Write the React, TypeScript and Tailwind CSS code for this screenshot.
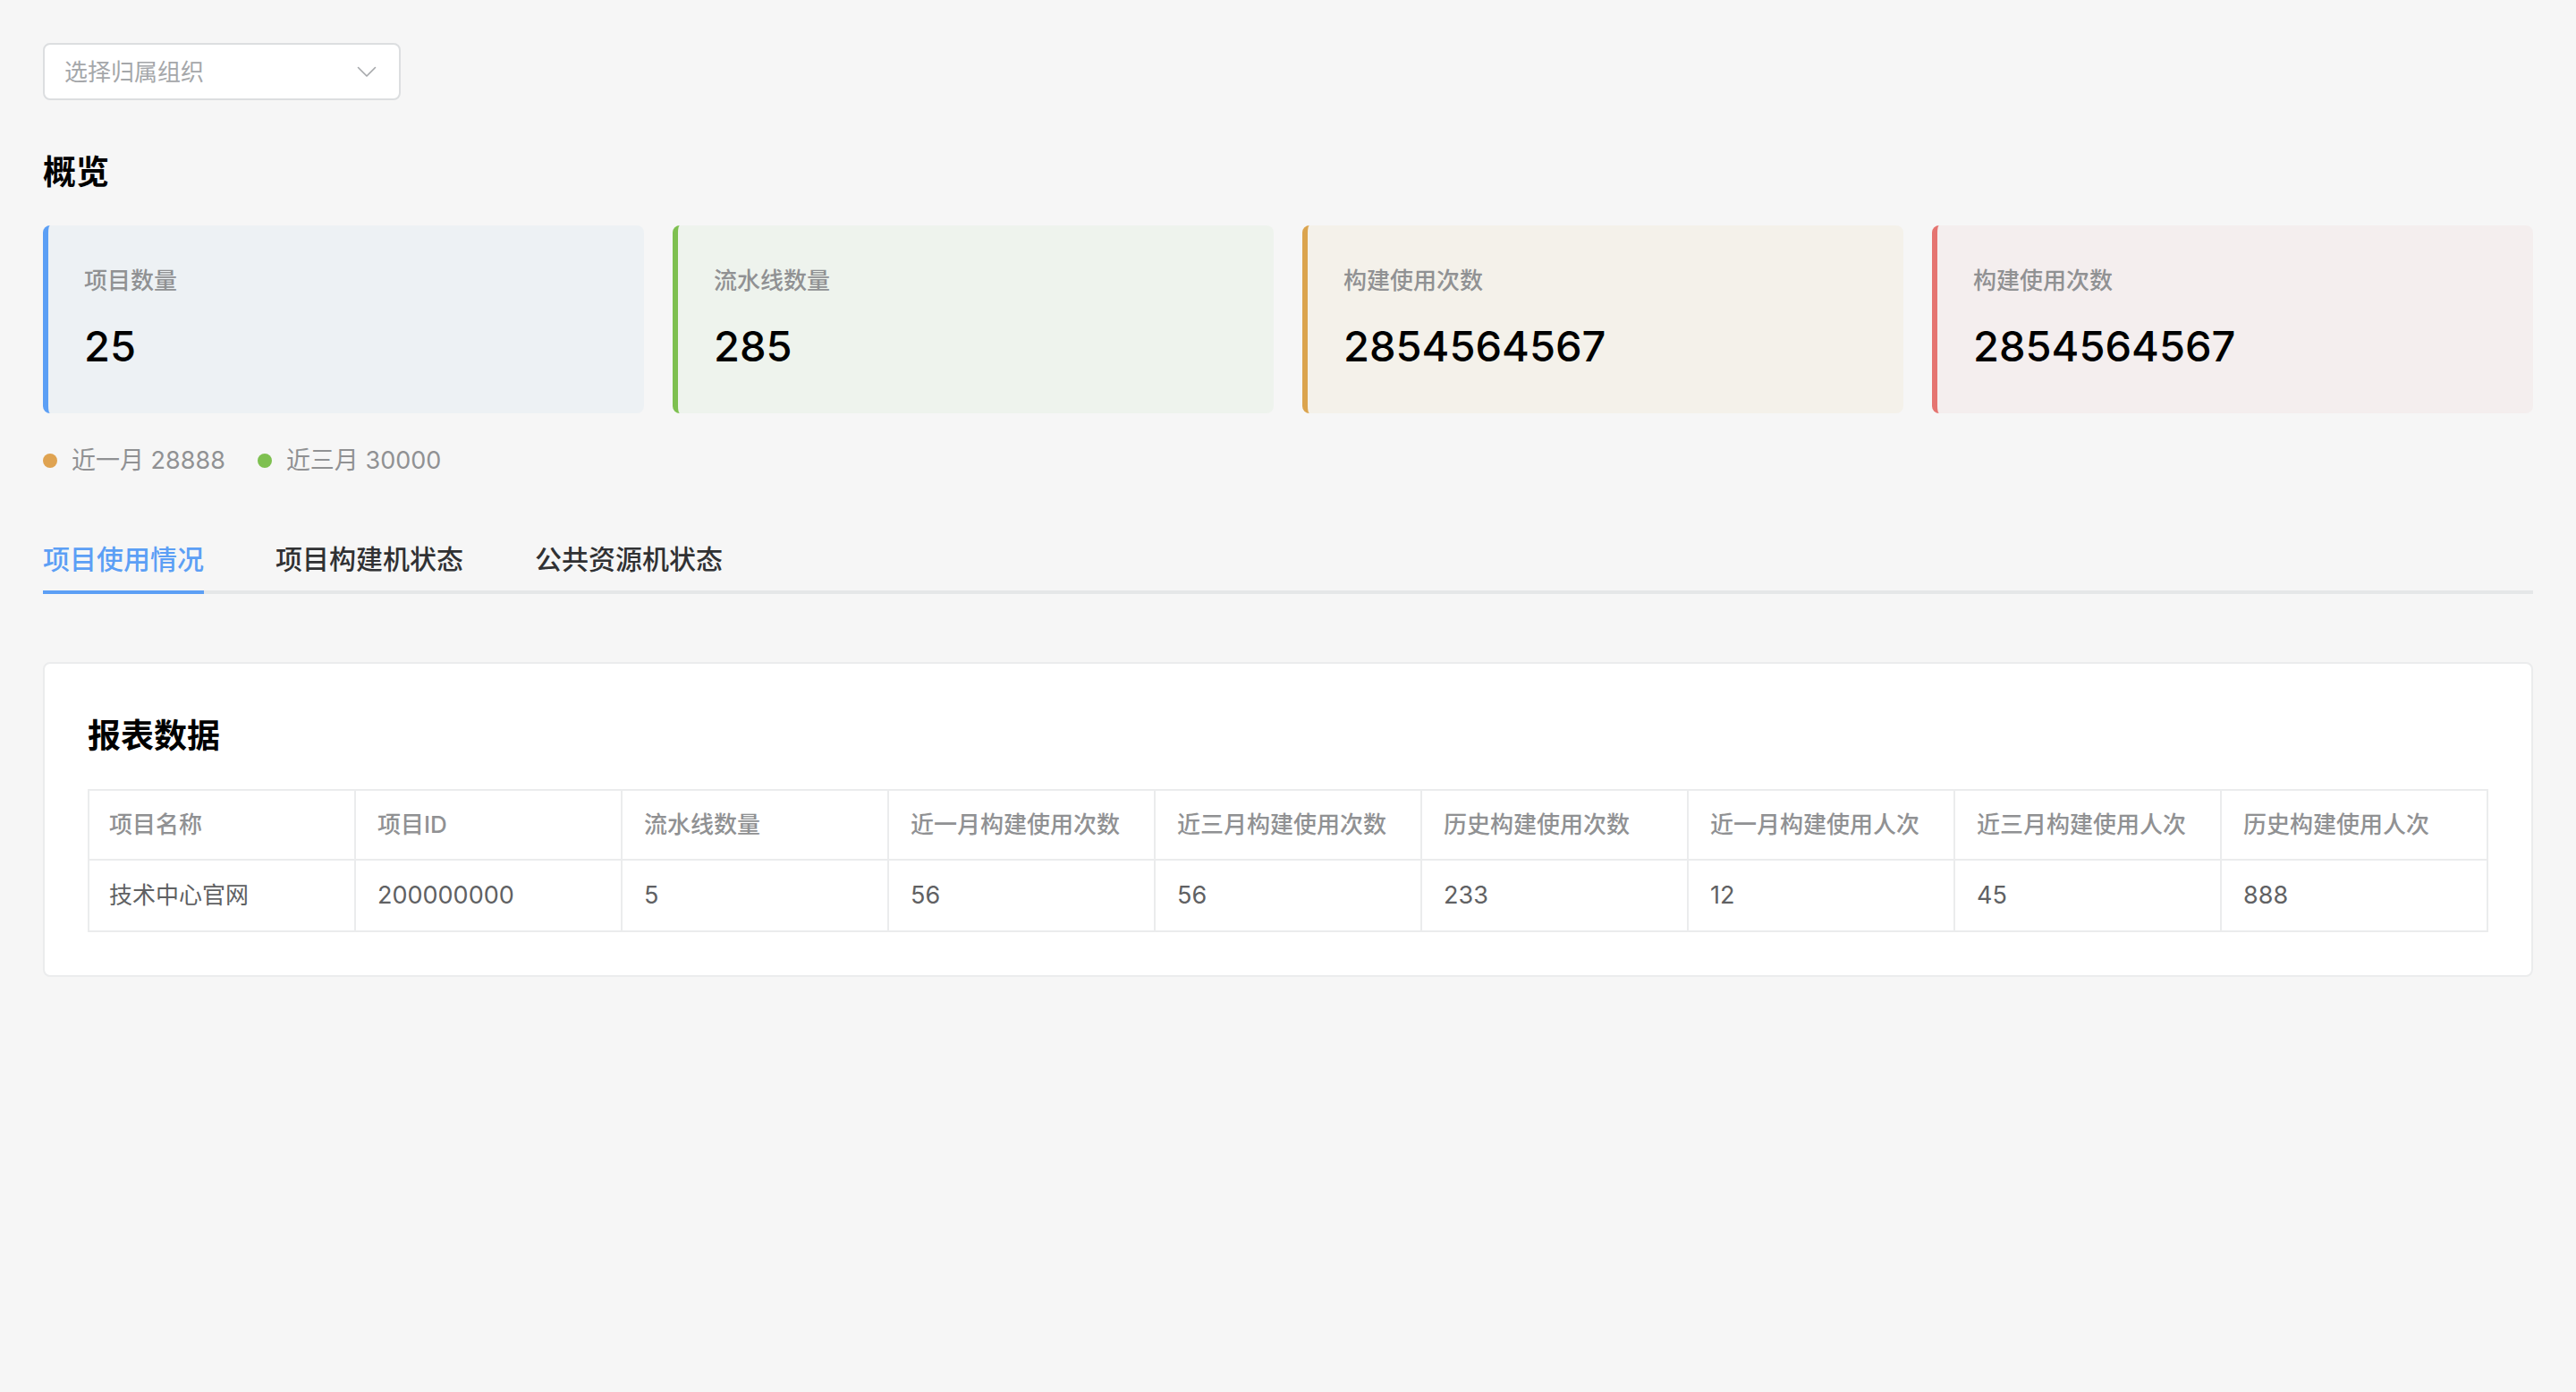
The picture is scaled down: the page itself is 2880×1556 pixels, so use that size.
import { useState } from "react";

const stats = [
  { label: "项目数量", value: "25", style: "border-[#5c9ff5] bg-[#edf1f4]" },
  { label: "流水线数量", value: "285", style: "border-[#7ec050] bg-[#eef3ed]" },
  { label: "构建使用次数", value: "2854564567", style: "border-[#dba44e] bg-[#f4f1ea]" },
  { label: "构建使用次数", value: "2854564567", style: "border-[#e57470] bg-[#f4eeee]" },
];

const legend = [
  { label: "近一月 28888", dot: "bg-[#dfa351]" },
  { label: "近三月 30000", dot: "bg-[#7ec050]" },
];

const tabs = ["项目使用情况", "项目构建机状态", "公共资源机状态"];

const columns = [
  "项目名称",
  "项目ID",
  "流水线数量",
  "近一月构建使用次数",
  "近三月构建使用次数",
  "历史构建使用次数",
  "近一月构建使用人次",
  "近三月构建使用人次",
  "历史构建使用人次",
];

const rows = [["技术中心官网", "200000000", "5", "56", "56", "233", "12", "45", "888"]];

function OrgSelect() {
  return (
    <div className="relative w-[400px]">
      <select
        aria-label="选择归属组织"
        defaultValue=""
        className="block h-16 w-full appearance-none rounded-lg border-2 border-[#dcdee0] bg-white pr-16 pl-[22px] text-[26px] text-[#a5a7aa] outline-none"
      >
        <option value="">选择归属组织</option>
      </select>
      <svg
        viewBox="0 0 24 14"
        className="pointer-events-none absolute top-[25px] right-[26px] h-[14px] w-6"
        fill="none"
        stroke="#a5a7aa"
        strokeWidth="1.6"
        strokeLinecap="round"
        strokeLinejoin="round"
      >
        <path d="M2.500 2.500 12 12l9.500-9.500" />
      </svg>
    </div>
  );
}

function Tabs({ active, onChange }: { active: number; onChange: (i: number) => void }) {
  return (
    <div role="tablist" className="mt-[70px] flex gap-20 shadow-[inset_0_-4px_0_#e5e7e8]">
      {tabs.map((tab, i) => (
        <button
          key={tab}
          type="button"
          role="tab"
          aria-selected={i === active}
          onClick={() => onChange(i)}
          className={
            i === active
              ? "border-b-4 border-[#5c9ff5] pb-[15px] text-[30px] leading-10 font-medium text-[#5c9ff5]"
              : "border-b-4 border-transparent pb-[15px] text-[30px] leading-10 font-medium text-[#303133]"
          }
        >
          {tab}
        </button>
      ))}
    </div>
  );
}

export default function App() {
  const [active, setActive] = useState(0);
  return (
    <main
      lang="zh-CN"
      className="min-h-screen bg-[#f6f6f6] p-12 font-[Inter,'Noto_Sans_CJK_SC',sans-serif] text-[26px] text-black"
    >
      <OrgSelect />

      <h2 className="mt-[55px] text-[37px] leading-[52px] font-bold">概览</h2>
      <section className="mt-[33px] grid grid-cols-4 gap-8">
        {stats.map((s, i) => (
          <div key={i} className={`rounded-lg border-l-[6px] pt-[42px] pb-11 pl-10 ${s.style}`}>
            <p className="leading-10 font-medium text-[#909193]">{s.label}</p>
            <p className="mt-[22px] text-[47px] leading-[62px] font-medium">{s.value}</p>
          </div>
        ))}
      </section>

      <ul className="mt-[33px] flex gap-9">
        {legend.map((l) => (
          <li
            key={l.label}
            className="flex items-center gap-4 text-[27px] leading-10 text-[#909193]"
          >
            <span className={`size-4 rounded-full ${l.dot}`} />
            {l.label}
          </li>
        ))}
      </ul>

      <Tabs active={active} onChange={setActive} />

      <section className="mt-[76px] rounded-lg border-2 border-[#ebeced] bg-white px-12 pt-[55px] pb-12">
        <h2 className="text-[37px] leading-[52px] font-bold">报表数据</h2>
        <table className="mt-[33px] w-full table-fixed border-separate border-spacing-0 border-t-2 border-l-2 border-[#ebeced] text-left">
          <thead>
            <tr>
              {columns.map((c) => (
                <th
                  key={c}
                  scope="col"
                  className="border-r-2 border-b-2 border-[#ebeced] py-[18px] pl-6 leading-10 font-medium whitespace-nowrap text-[#909193] first:pl-[22px]"
                >
                  {c}
                </th>
              ))}
            </tr>
          </thead>
          <tbody>
            {rows.map((row) => (
              <tr key={row[0]}>
                {row.map((cell, i) => (
                  <td
                    key={i}
                    className="border-r-2 border-b-2 border-[#ebeced] py-[19px] pl-6 text-[27px] leading-10 whitespace-nowrap text-[#606163] first:pl-[22px] first:text-[26px]"
                  >
                    {cell}
                  </td>
                ))}
              </tr>
            ))}
          </tbody>
        </table>
      </section>
    </main>
  );
}
